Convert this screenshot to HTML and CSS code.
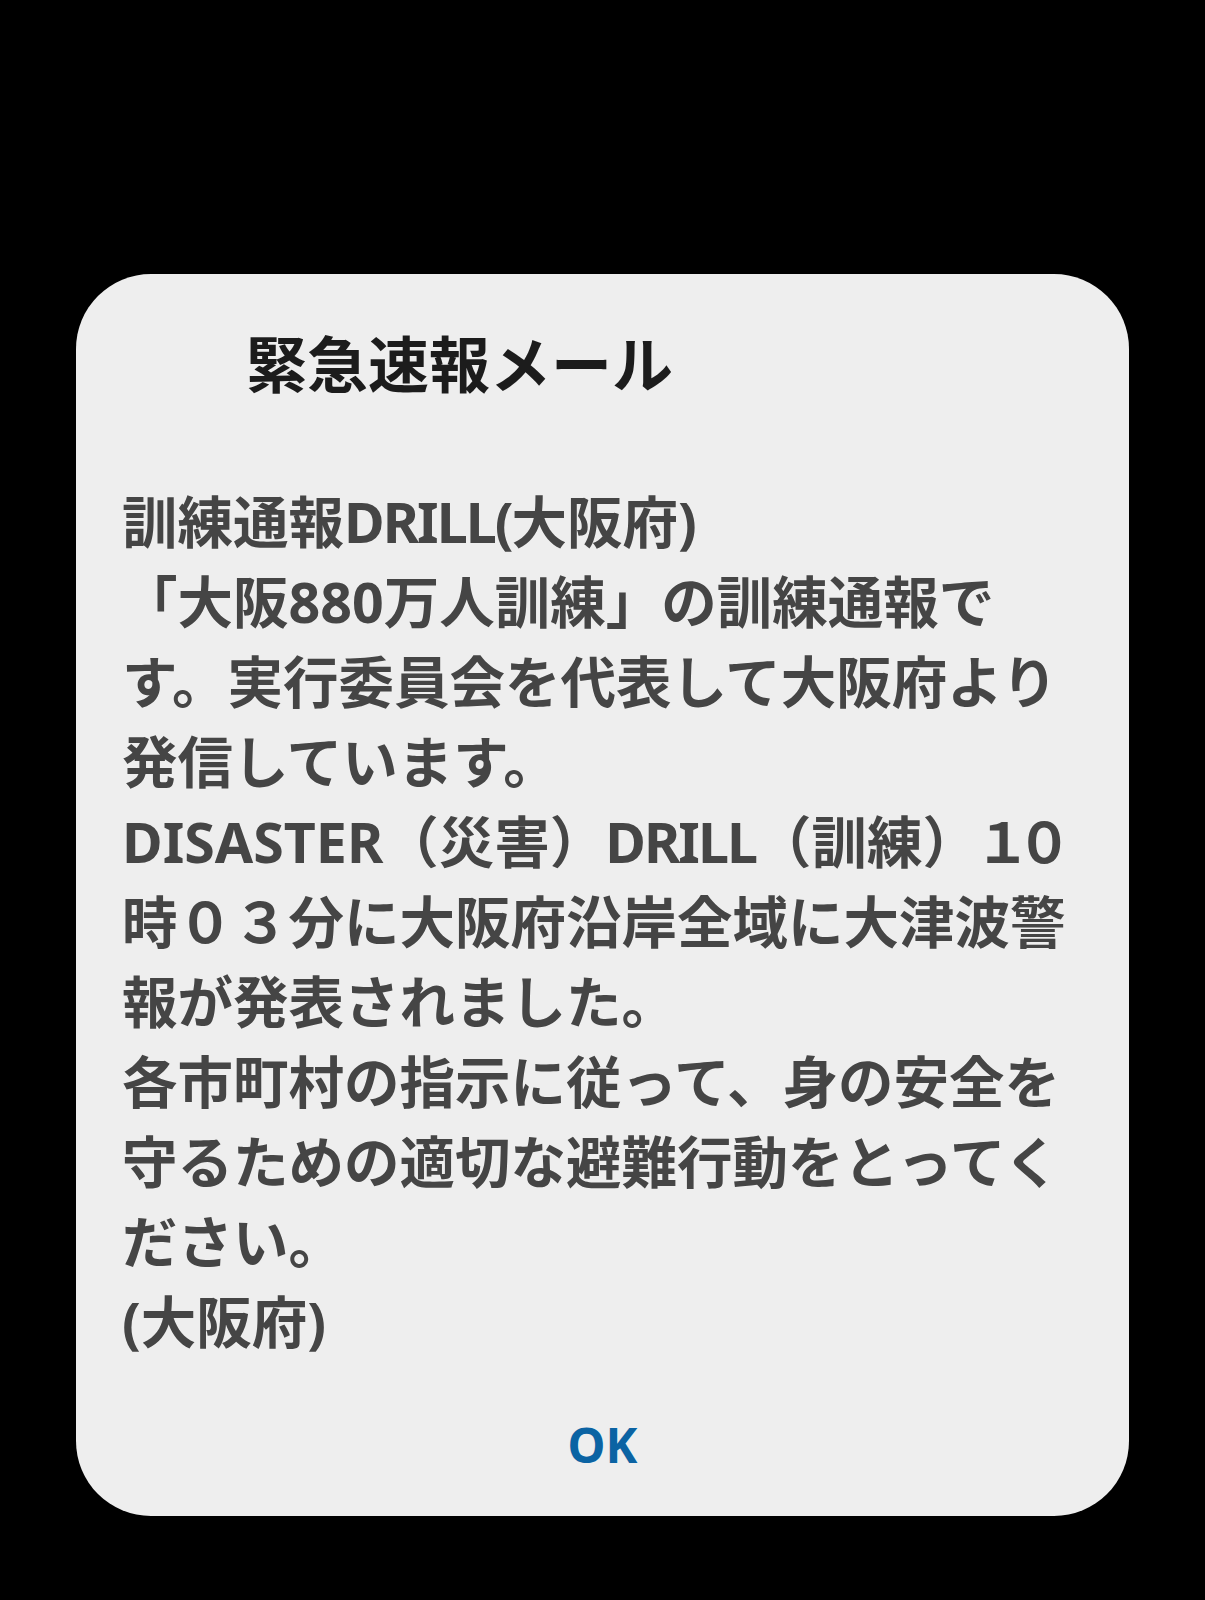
FILE: index.html
```html
<!DOCTYPE html>
<html lang="ja">
<head>
  <meta charset="UTF-8">
  <meta name="viewport" content="width=device-width, initial-scale=1.0">
  <title>緊急速報メール</title>
  <link rel="stylesheet" href="styles.css">
</head>
<body>
  <!-- ダイアログ -->
  <div class="dialog">
    <h1 class="dialog-title">緊急速報メール</h1>
    <p class="dialog-message">
      訓練通報<span class="latin">DRILL(</span>大阪府<span class="latin">)</span><br>
      「大阪880万人訓練」の訓練通報で<br>
      す。実行委員会を代表して大阪府より<br>
      発信しています。<br>
      DISASTER（災害）<span class="latin">DRILL</span>（訓練）<span class="num">１０</span><br>
      時０３分に大阪府沿岸全域に大津波警<br>
      報が発表されました。<br>
      各市町村の指示に従って、身の安全を<br>
      守るための適切な避難行動をとってく<br>
      ださい。<br>
      (大阪府)
    </p>
    <div class="dialog-actions">
      <button class="ok-btn">OK</button>
    </div>
  </div>
</body>
</html>
```

FILE: styles.css
```css
html, body {
  margin: 0;
  padding: 0;
  background-color: #000;
}
body {
  height: 1600px;
  font-family: "Noto Sans", "Noto Sans CJK JP", sans-serif;
  padding-top: 274px;
  box-sizing: border-box;
}
.dialog {
  margin-left: 76px;
  width: 1053px;
  height: 1242px;
  box-sizing: border-box;
  background-color: #eeeeee;
  border-radius: 75px;
  padding: 51px 0 0 0;
}
.dialog-title {
  margin: 0 0 77px 0;
  padding-left: 170px;
  font-size: 61px;
  line-height: 80px;
  font-weight: 700;
  color: #1c1c1c;
}
.dialog-message {
  margin: 0;
  padding-left: 46px;
  font-size: 55.5px;
  line-height: 80px;
  font-weight: 700;
  color: #454545;
  white-space: nowrap;
}
.latin {
  letter-spacing: -2px;
}
.num {
  margin-left: -3px;
  letter-spacing: -14px;
}
.dialog-actions {
  text-align: center;
  margin-top: 53px;
}
.ok-btn {
  font-family: "Noto Sans", sans-serif;
  font-size: 48px;
  line-height: 60px;
  font-weight: 700;
  color: #0b63a3;
  background: none;
  border: none;
  padding: 0;
  cursor: pointer;
}
```
